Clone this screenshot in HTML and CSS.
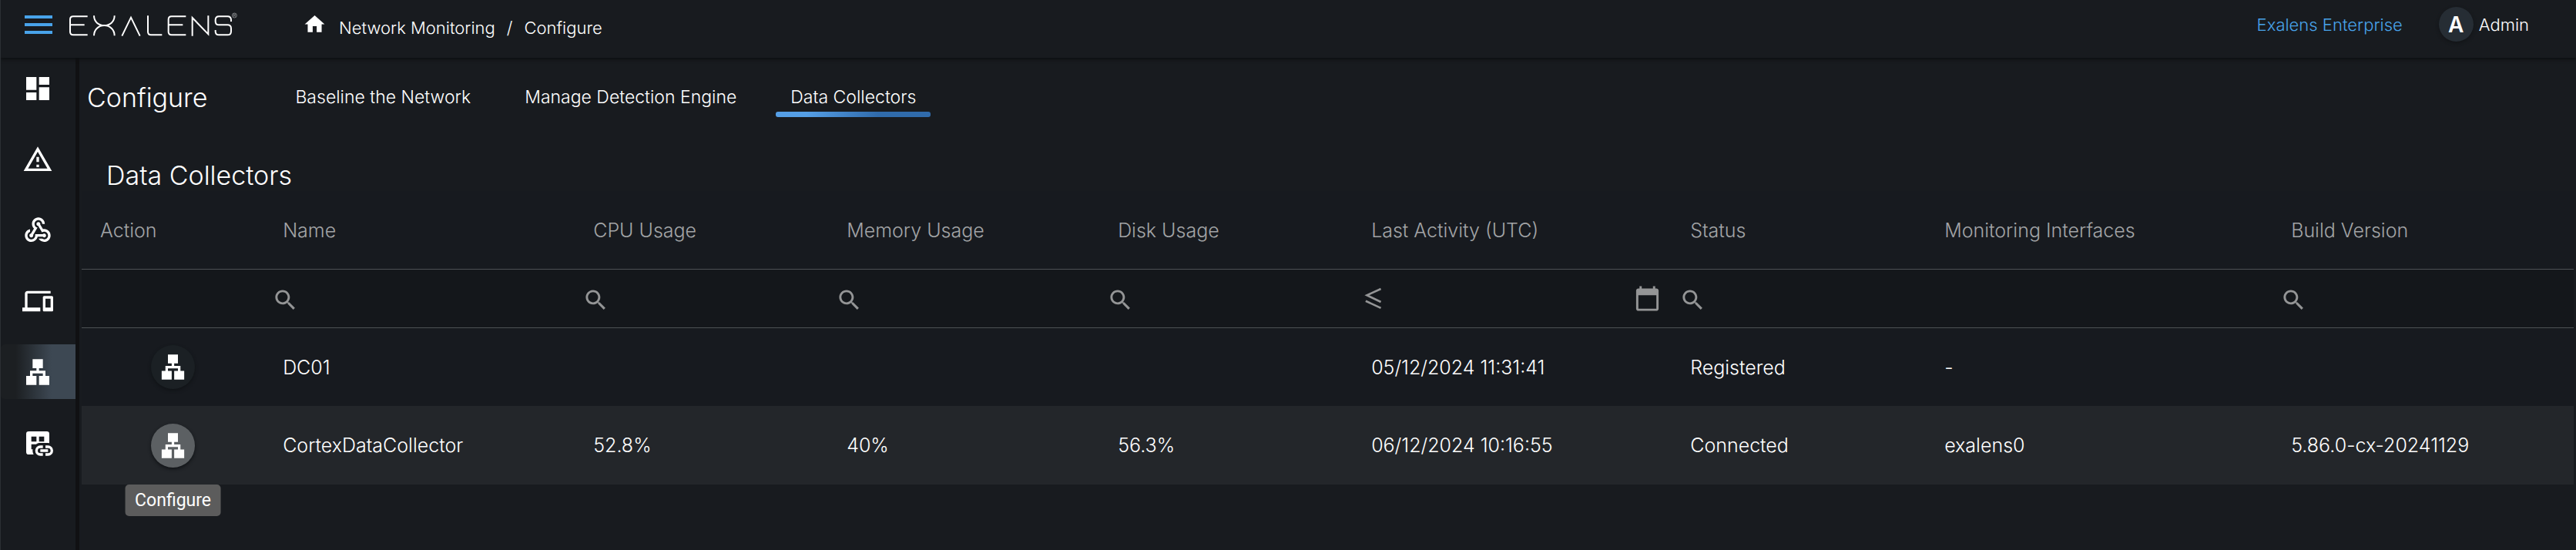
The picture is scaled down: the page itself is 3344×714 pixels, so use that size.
FILE: index.html
```html
<!DOCTYPE html>
<html lang="en">
<head>
<meta charset="utf-8">
<meta name="viewport" content="width=device-width, initial-scale=1">
<title>Configure - Data Collectors</title>
<link rel="stylesheet" href="styles.css">
</head>
<body>
<svg class="defs" aria-hidden="true">
  <symbol id="i-lan" viewBox="0 0 24 24"><path d="M13 22h8v-7h-3v-4h-5V9h3V2H8v7h3v2H6v4H3v7h8v-7H8v-2h8v2h-3v7z"/></symbol>
  <symbol id="i-search" viewBox="0 0 24 24"><path d="M15.5 14h-.79l-.28-.27C15.41 12.59 16 11.11 16 9.5 16 5.91 13.09 3 9.5 3S3 5.91 3 9.5 5.91 16 9.5 16c1.61 0 3.09-.59 4.23-1.57l.27.28v.79l5 4.99L20.49 19l-4.99-5zm-6 0C7.01 14 5 11.99 5 9.5S7.01 5 9.5 5 14 7.01 14 9.5 11.99 14 9.5 14z"/></symbol>
</svg>

<header class="topbar">
  <button class="menu" type="button" aria-label="Toggle menu"><span></span><span></span><span></span></button>
  <a class="logo" href="#" aria-label="Exalens">
    <svg class="line" viewBox="28 12 660 99" stroke="#fff" stroke-width="6" aria-hidden="true">
      <path d="M102 31H46Q34 31 34 43V91Q34 103 46 103H102M34 64H90"/>
      <path d="M127 28C127 52 145 66 167 66S207 52 207 28M127 106C127 82 145 66 167 66S207 82 207 106"/>
      <path d="M236 107L271 35L306 107"/>
      <path d="M337 28V91Q337 103 349 103H392"/>
      <path d="M485 31H429Q417 31 417 43V91Q417 103 429 103H485M417 64H473"/>
      <path d="M510 107V36L572 100V28"/>
      <path d="M661 51V45Q661 31 647 31H614Q600 31 600 45V50Q600 64 614 64H647Q661 64 661 78V89Q661 103 647 103H614Q600 103 600 89V84"/>
      <g stroke="#a9acae" stroke-width="2"><circle cx="674" cy="27" r="9"/><path d="M671 32V22H675Q678 22 678 25T675 28H671M675 28L678 32"/></g>
    </svg>
  </a>
  <nav class="crumbs" aria-label="Breadcrumb">
    <a class="home" href="#" aria-label="Home"><svg viewBox="0 0 24 24"><path d="M10 20v-6h4v6h5v-8h3L12 3 2 12h3v8z"/></svg></a>
    <div class="trail"><a href="#">Network Monitoring</a><span>/</span><a href="#">Configure</a></div>
  </nav>
  <div class="account">
    <a class="plan" href="#">Exalens Enterprise</a>
    <button class="user" type="button"><span class="avatar">A</span>Admin</button>
  </div>
</header>

<div class="shell">
  <nav class="sidebar" aria-label="Main">
    <a href="#" aria-label="Dashboard"><svg viewBox="0 0 24 24"><path d="M3 13h8V3H3v10zm0 8h8v-6H3v6zm10 0h8V11h-8v10zm0-18v6h8V3h-8z"/></svg></a>
    <a href="#" aria-label="Alerts"><svg viewBox="0 0 24 24"><path d="M12 5.99L19.53 19H4.47L12 5.99M12 2L1 21h22L12 2zm1 14h-2v2h2v-2zm0-6h-2v4h2v-4z"/></svg></a>
    <a href="#" aria-label="Integrations"><svg viewBox="0 0 24 24"><path d="M10 15h5.88c.27-.31.67-.5 1.12-.5.83 0 1.5.67 1.5 1.5s-.67 1.5-1.5 1.5c-.44 0-.84-.19-1.12-.5H11.9c-.46 2.28-2.48 4-4.9 4-2.76 0-5-2.24-5-5 0-2.42 1.72-4.44 4-4.9v2.07c-1.16.41-2 1.53-2 2.83 0 1.65 1.35 3 3 3s3-1.35 3-3v-1zm2.5-11c1.65 0 3 1.35 3 3h2c0-2.76-2.24-5-5-5s-5 2.24-5 5c0 1.43.6 2.71 1.55 3.62l-2.35 3.9c-.68.14-1.2.75-1.2 1.48 0 .83.67 1.5 1.5 1.5s1.5-.67 1.5-1.5c0-.16-.02-.31-.07-.45l3.38-5.63C10.49 9.61 9.5 8.42 9.5 7c0-1.65 1.35-3 3-3zm4.5 9c-.64 0-1.23.2-1.72.54l-3.05-5.07C11.53 8.35 11 7.74 11 7c0-.83.67-1.5 1.5-1.5S14 6.17 14 7c0 .15-.02.29-.06.43l2.19 3.65c.28-.05.57-.08.87-.08 2.76 0 5 2.24 5 5s-2.24 5-5 5c-1.85 0-3.47-1.01-4.33-2.5h2.67c.48.32 1.05.5 1.66.5 1.65 0 3-1.35 3-3s-1.35-3-3-3z"/></svg></a>
    <a href="#" aria-label="Devices"><svg viewBox="0 0 24 24"><path d="M4 6h18V4H4c-1.1 0-2 .9-2 2v11H0v3h14v-3H4V6zm19 2h-6c-.55 0-1 .45-1 1v10c0 .55.45 1 1 1h6c.55 0 1-.45 1-1V9c0-.55-.45-1-1-1zm-1 9h-4v-7h4v7z"/></svg></a>
    <a class="active" href="#" aria-label="Network Monitoring" aria-current="page"><svg><use href="#i-lan"/></svg></a>
    <a href="#" aria-label="Linked data"><svg viewBox="0 0 24 24"><path fill-rule="evenodd" d="M5 3h14a2 2 0 0 1 2 2v7.1a6 6 0 0 0-1-.1h-6c-1.1 0-2.1.3-3 .8V13H7v4h1.1c-.1.3-.1.7-.1 1 0 1.1.3 2.1.8 3H5a2 2 0 0 1-2-2V5a2 2 0 0 1 2-2zM7 7v4h4V7zM13 7v4h4V7z"/><path d="M16 20h-2a2 2 0 0 1 0-4h2v-2h-2a4 4 0 0 0 0 8h2zM20 14h-2v2h2a2 2 0 0 1 0 4h-2v2h2a4 4 0 0 0 0-8zM20 19v-2h-6v2z"/></svg></a>
  </nav>

  <main class="main">
    <div class="pagehead">
      <h1>Configure</h1>
      <nav class="tabs" aria-label="Configure sections">
        <a href="#">Baseline the Network</a>
        <a href="#">Manage Detection Engine</a>
        <a class="active" href="#" aria-current="page">Data Collectors</a>
      </nav>
    </div>

    <section class="panel">
      <h2>Data Collectors</h2>
      <table class="grid">
        <colgroup>
          <col class="c-action"><col class="c-name"><col class="c-cpu"><col class="c-mem"><col class="c-disk"><col class="c-last"><col class="c-status"><col class="c-ifaces"><col class="c-build">
        </colgroup>
        <thead>
          <tr>
            <th>Action</th><th>Name</th><th>CPU Usage</th><th>Memory Usage</th><th>Disk Usage</th><th>Last Activity (UTC)</th><th>Status</th><th>Monitoring Interfaces</th><th>Build Version</th>
          </tr>
          <tr class="filters">
            <td></td>
            <td><label class="filter"><svg><use href="#i-search"/></svg><input type="text" aria-label="Filter by name"></label></td>
            <td><label class="filter"><svg><use href="#i-search"/></svg><input type="text" aria-label="Filter by CPU usage"></label></td>
            <td><label class="filter"><svg><use href="#i-search"/></svg><input type="text" aria-label="Filter by memory usage"></label></td>
            <td><label class="filter"><svg><use href="#i-search"/></svg><input type="text" aria-label="Filter by disk usage"></label></td>
            <td>
              <div class="filter date">
                <button type="button" aria-label="Comparison: less than or equal"><svg class="line" viewBox="0 0 24 24" stroke="currentColor" stroke-width="1.8"><path d="M18.2 3.4L5.8 9.1L18.2 15.1M4.7 14.2L18.2 20.5"/></svg></button>
                <input type="text" aria-label="Filter by last activity">
                <button type="button" aria-label="Pick a date"><svg viewBox="0 0 24 24"><path d="M20 3h-1V1h-2v2H7V1H5v2H4c-1.1 0-2 .9-2 2v16c0 1.1.9 2 2 2h16c1.1 0 2-.9 2-2V5c0-1.1-.9-2-2-2zm0 18H4V9h16v12z"/></svg></button>
              </div>
            </td>
            <td><label class="filter"><svg><use href="#i-search"/></svg><input type="text" aria-label="Filter by status"></label></td>
            <td></td>
            <td><label class="filter"><svg><use href="#i-search"/></svg><input type="text" aria-label="Filter by build version"></label></td>
          </tr>
        </thead>
        <tbody>
          <tr>
            <td class="act"><button class="round" type="button" aria-label="Configure DC01"><svg><use href="#i-lan"/></svg></button></td>
            <td>DC01</td><td></td><td></td><td></td><td>05/12/2024 11:31:41</td><td>Registered</td><td>-</td><td></td>
          </tr>
          <tr class="hover">
            <td class="act"><button class="round hot" type="button"><svg><use href="#i-lan"/></svg><span class="tip" role="tooltip">Configure</span></button></td>
            <td>CortexDataCollector</td><td>52.8%</td><td>40%</td><td>56.3%</td><td>06/12/2024 10:16:55</td><td>Connected</td><td>exalens0</td><td>5.86.0-cx-20241129</td>
          </tr>
        </tbody>
      </table>
    </section>
  </main>
</div>
</body>
</html>
```
FILE: styles.css
```css
* { box-sizing: border-box; }

body {
  margin: 0;
  min-height: 100vh;
  display: flex;
  flex-direction: column;
  border-left: 1px solid #2b2f33;
  background: #181b1f;
  color: #fff;
  font-family: Inter, "Liberation Sans", sans-serif;
  font-size: 25px;
  font-weight: 300;
}

a { color: inherit; text-decoration: none; }
button, input { font: inherit; color: inherit; background: none; border: 0; padding: 0; margin: 0; }
button { cursor: pointer; }
svg { display: block; fill: currentColor; }
svg.line { fill: none; }
.defs { position: absolute; width: 0; height: 0; }

/* Top bar */
.topbar {
  position: relative;
  z-index: 1;
  display: flex;
  align-items: center;
  height: 75px;
  padding: 0 61px 12px 31px;
  box-shadow: 0 2px 4px #0d0f11;
  background: #181b1f;
}
.menu { display: grid; gap: 6px; width: 36px; }
.menu span { height: 4px; background: #48a3ea; }
.logo { margin-left: 21px; }
.logo svg { width: 220px; height: 33px; }
.crumbs { display: flex; align-items: center; gap: 16px; margin-left: 84px; font-size: 22px; }
.crumbs svg { width: 31px; height: 31px; }
.trail { display: flex; gap: 15px; padding-top: 8px; }
.account { display: flex; align-items: center; gap: 47px; margin-left: auto; font-size: 22px; }
.plan { color: #48a3ea; }
.user { display: flex; align-items: center; gap: 7px; }
.avatar {
  display: grid;
  place-items: center;
  width: 45px;
  height: 45px;
  border-radius: 50%;
  background: #262d34;
  box-shadow: 0 2px 4px #121417;
  font-size: 28px;
  font-weight: 600;
}

/* Sidebar */
.shell { display: flex; flex: 1; }
.sidebar {
  display: flex;
  flex-direction: column;
  flex: none;
  gap: 21px;
  width: 102px;
  padding-top: 4px;
  border-right: 5px solid #101113;
}
.sidebar a { display: grid; place-items: center; height: 71px; padding-right: 2px; }
.sidebar svg { width: 40px; height: 40px; }
.sidebar .active {
  border-radius: 6px 0 0 6px;
  background: linear-gradient(90deg, #1c1f22 20%, #3d4853 68%);
}

/* Page heading and tabs */
.main { flex: 1; min-width: 0; padding-top: 4px; }
.pagehead { display: flex; align-items: center; gap: 95px; height: 94px; padding-left: 10px; }
h1, h2 { margin: 0; font-size: 34px; font-weight: 300; line-height: 41px; }
.tabs { display: flex; gap: 32px; font-size: 23px; }
.tabs a { padding: 8px 19px 0; line-height: 37px; }
.tabs a::after { content: ""; display: block; height: 7px; margin: 0 -19px; border-radius: 3px; }
.tabs .active::after { background: linear-gradient(90deg, #559fe6 20%, #306bab 66%); }

/* Data grid */
.panel { padding: 34px 3px 0; }
h2 { padding-left: 32px; }
.grid { width: 100%; table-layout: fixed; border-collapse: separate; border-spacing: 0; background: #171a1f; }
.c-action { width: 7.33%; }
.c-name { width: 12.46%; }
.c-cpu { width: 10.17%; }
.c-mem { width: 10.88%; }
.c-disk { width: 10.17%; }
.c-last { width: 12.8%; }
.c-status { width: 10.2%; }
.c-ifaces { width: 13.91%; }
.c-build { width: 12.08%; }
.grid th, .grid td { height: 101px; padding: 0 24px; text-align: left; font-weight: 300; white-space: nowrap; }
.grid th { height: 102px; border-bottom: 1px solid #4d5154; color: #a2a4a6; }
.grid .filters td { height: 76px; padding: 0 10px; border-bottom: 1px solid #4d5154; background: #14171b; }
.filter { display: flex; align-items: center; padding-top: 4px; color: #949596; }
.filter svg { flex: none; width: 35px; height: 35px; }
.filter input { flex: 1; width: 0; min-width: 0; outline: 0; color: #fff; }
.filter.date { padding: 0 4px 0 0; }
.grid .hover td { height: 102px; background: #23262a; }
.grid .act { padding: 0; text-align: center; }
.round {
  position: relative;
  display: inline-grid;
  place-items: center;
  width: 57px;
  height: 57px;
  border-radius: 50%;
  background: #1b2024;
  box-shadow: 0 2px 4px #101316;
  vertical-align: middle;
}
.round svg { width: 39px; height: 39px; }
.round.hot { background: #5c6063; }
.tip {
  position: absolute;
  top: 100%;
  left: 50%;
  transform: translateX(-50%);
  margin-top: 22px;
  padding: 0 13px;
  border-radius: 5px;
  background: #5c5c5c;
  font-family: Roboto, sans-serif;
  font-size: 23px;
  font-weight: 400;
  line-height: 41px;
}
```
